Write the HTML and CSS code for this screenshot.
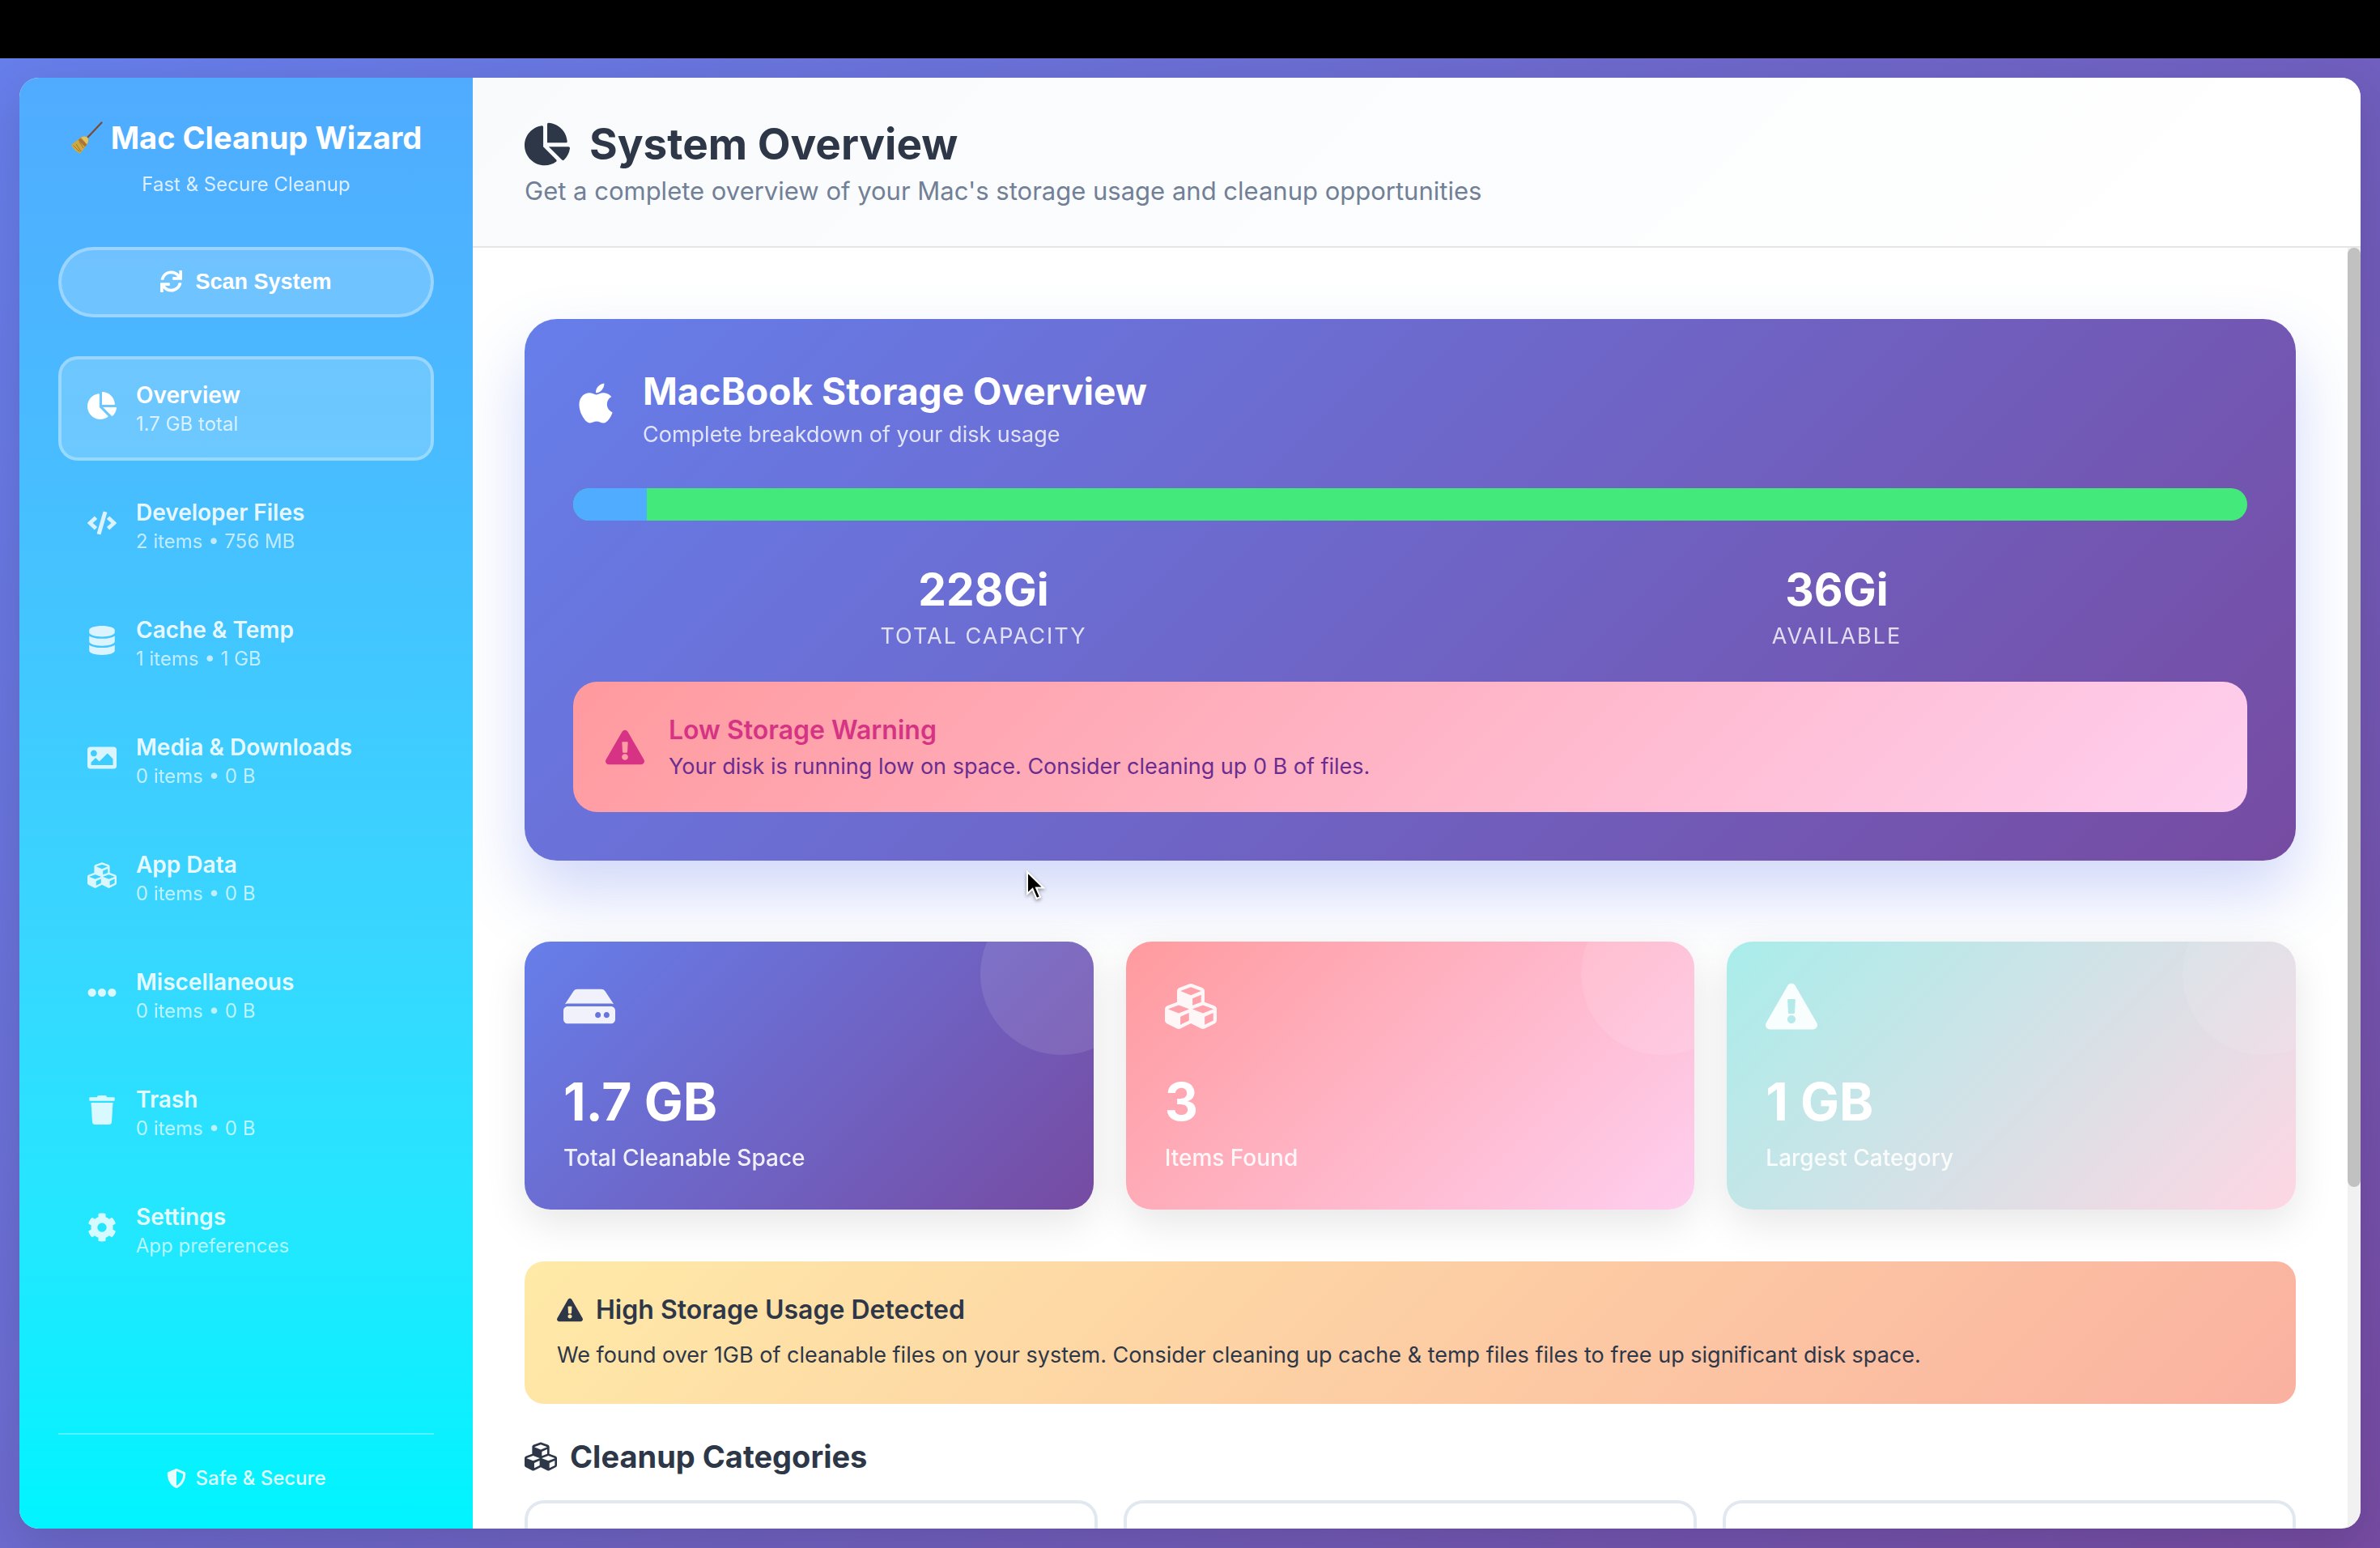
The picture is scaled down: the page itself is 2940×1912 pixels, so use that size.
FILE: index.html
```html
<!DOCTYPE html>
<html lang="en">
<head>
<meta charset="utf-8">
<title>Mac Cleanup Wizard</title>
<link rel="stylesheet" href="styles.css">
</head>
<body>
<svg class="sprite" aria-hidden="true">
  <symbol id="i-pie" viewBox="0 0 544 512"><path d="M527.79 288H290.5l158.03 158.03c6.04 6.04 15.98 6.53 22.19.68 38.7-36.46 65.32-85.61 73.13-140.86 1.34-9.46-6.51-17.85-16.06-17.85zm-15.83-64.8C503.72 103.74 408.26 8.28 288.8.04 279.68-.59 272 7.1 272 16.24V240h223.77c9.14 0 16.82-7.68 16.19-16.8zM224 288V50.71c0-9.55-8.39-17.4-17.84-16.06C86.99 51.49-4.1 155.6.14 280.37 4.5 408.51 114.83 513.59 243.03 511.98c50.4-.63 96.97-16.87 135.26-44.03 7.9-5.6 8.42-17.23 1.57-24.08L224 288z"/></symbol>
  <symbol id="i-code" viewBox="0 0 640 512"><path d="M278.9 511.5l-61-17.7c-6.4-1.8-10-8.5-8.2-14.9L346.2 8.7c1.8-6.4 8.5-10 14.9-8.2l61 17.7c6.4 1.8 10 8.5 8.2 14.9L293.8 503.3c-1.9 6.4-8.5 10.1-14.9 8.2zm-114-112.2l43.5-46.4c4.6-4.9 4.3-12.7-.8-17.2L117 256l90.6-79.7c5.1-4.5 5.5-12.3.8-17.2l-43.5-46.4c-4.5-4.8-12.1-5.1-17-.5L3.8 247.2c-5.1 4.7-5.1 12.8 0 17.5l144.1 135.1c4.9 4.6 12.5 4.4 17-.5zm327.2.6l144.1-135.1c5.1-4.7 5.1-12.8 0-17.5L492.1 112.1c-4.8-4.5-12.4-4.3-17 .5L431.6 159c-4.6 4.9-4.3 12.7.8 17.2L523 256l-90.6 79.7c-5.1 4.5-5.5 12.3-.8 17.2l43.5 46.4c4.5 4.9 12.1 5.1 17 .6z"/></symbol>
  <symbol id="i-database" viewBox="0 0 448 512"><path d="M448 73.143v45.714C448 159.143 347.667 192 224 192S0 159.143 0 118.857V73.143C0 32.857 100.333 0 224 0s224 32.857 224 73.143zM448 176v102.857C448 319.143 347.667 352 224 352S0 319.143 0 278.857V176c48.125 33.143 136.208 48.572 224 48.572S399.874 209.143 448 176zm0 160v102.857C448 479.143 347.667 512 224 512S0 479.143 0 438.857V336c48.125 33.143 136.208 48.572 224 48.572S399.874 369.143 448 336z"/></symbol>
  <symbol id="i-image" viewBox="0 0 512 512"><path d="M464 448H48c-26.51 0-48-21.49-48-48V112c0-26.51 21.49-48 48-48h416c26.51 0 48 21.49 48 48v288c0 26.51-21.49 48-48 48zM112 120c-30.928 0-56 25.072-56 56s25.072 56 56 56 56-25.072 56-56-25.072-56-56-56zM64 384h384V272l-87.515-87.515c-4.686-4.686-12.284-4.686-16.971 0L208 320l-55.515-55.515c-4.686-4.686-12.284-4.686-16.971 0L64 336v48z"/></symbol>
  <symbol id="i-cubes" viewBox="0 0 512 512"><path d="M488.6 250.2L392 214V105.5c0-15-9.3-28.4-23.4-33.7l-100-37.5c-8.1-3.1-17.1-3.1-25.3 0l-100 37.5c-14.1 5.3-23.4 18.7-23.4 33.7V214l-96.6 36.2C9.3 255.5 0 268.9 0 283.9V394c0 13.6 7.7 26.1 19.9 32.2l100 50c10.1 5.1 22.1 5.1 32.2 0l103.9-52 103.9 52c10.1 5.1 22.1 5.1 32.2 0l100-50c12.2-6.1 19.9-18.6 19.9-32.2V283.9c0-15-9.3-28.4-23.4-33.7zM358 214.8l-85 31.9v-68.2l85-37v73.3zM154 104.1l102-38.2 102 38.2v.6l-102 41.4-102-41.4v-.6zm84 291.1l-85 42.5v-79.1l85-38.8v75.4zm0-112l-102 41.4-102-41.4v-.6l102-38.2 102 38.2v.6zm240 112l-85 42.5v-79.1l85-38.8v75.4zm0-112l-102 41.4-102-41.4v-.6l102-38.2 102 38.2v.6z"/></symbol>
  <symbol id="i-dots" viewBox="0 0 512 512"><path d="M328 256c0 39.8-32.2 72-72 72s-72-32.2-72-72 32.2-72 72-72 72 32.2 72 72zm104-72c-39.8 0-72 32.2-72 72s32.2 72 72 72 72-32.2 72-72-32.2-72-72-72zm-352 0c-39.8 0-72 32.2-72 72s32.2 72 72 72 72-32.2 72-72-32.2-72-72-72z"/></symbol>
  <symbol id="i-trash" viewBox="0 0 448 512"><path d="M432 32H312l-9.4-18.7A24 24 0 0 0 281.1 0H166.8a23.72 23.72 0 0 0-21.4 13.3L136 32H16A16 16 0 0 0 0 48v32a16 16 0 0 0 16 16h416a16 16 0 0 0 16-16V48a16 16 0 0 0-16-16zM53.2 467a48 48 0 0 0 47.9 45h245.8a48 48 0 0 0 47.9-45L416 128H32z"/></symbol>
  <symbol id="i-cog" viewBox="0 0 512 512"><path d="M487.4 315.7l-42.6-24.6c4.3-23.2 4.3-47 0-70.2l42.6-24.6c4.9-2.8 7.1-8.6 5.5-14-11.1-35.6-30-67.8-54.7-94.6-3.8-4.1-10-5.1-14.8-2.3L380.8 110c-17.9-15.4-38.5-27.3-60.8-35.1V25.8c0-5.6-3.9-10.5-9.4-11.7-36.7-8.2-74.3-7.8-109.2 0-5.5 1.2-9.4 6.1-9.4 11.7V75c-22.2 7.9-42.8 19.8-60.8 35.1L88.7 85.5c-4.9-2.8-11-1.9-14.8 2.3-24.7 26.7-43.6 58.9-54.7 94.6-1.7 5.4.6 11.2 5.5 14L67.3 221c-4.3 23.2-4.3 47 0 70.2l-42.6 24.6c-4.9 2.8-7.1 8.6-5.5 14 11.1 35.6 30 67.8 54.7 94.6 3.8 4.1 10 5.1 14.8 2.3l42.6-24.6c17.9 15.4 38.5 27.3 60.8 35.1v49.2c0 5.6 3.9 10.5 9.4 11.7 36.7 8.2 74.3 7.8 109.2 0 5.5-1.2 9.4-6.1 9.4-11.7v-49.2c22.2-7.9 42.8-19.8 60.8-35.1l42.6 24.6c4.9 2.8 11 1.9 14.8-2.3 24.7-26.7 43.6-58.9 54.7-94.6 1.5-5.5-.7-11.3-5.6-14.1zM256 336c-44.1 0-80-35.9-80-80s35.9-80 80-80 80 35.9 80 80-35.9 80-80 80z"/></symbol>
  <symbol id="i-sync" viewBox="0 0 512 512"><path d="M440.65 12.57l4 82.77A247.16 247.16 0 0 0 255.83 8C134.73 8 33.91 94.92 12.29 209.82A12 12 0 0 0 24.09 224h49.05a12 12 0 0 0 11.67-9.26 175.91 175.91 0 0 1 317-56.94l-101.46-4.86a12 12 0 0 0-12.57 12v47.41a12 12 0 0 0 12 12H500a12 12 0 0 0 12-12V12a12 12 0 0 0-12-12h-47.37a12 12 0 0 0-11.98 12.57zM255.83 432a175.61 175.61 0 0 1-146-77.8l101.8 4.87a12 12 0 0 0 12.57-12v-47.4a12 12 0 0 0-12-12H12a12 12 0 0 0-12 12V500a12 12 0 0 0 12 12h47.35a12 12 0 0 0 12-12.6l-4.15-82.57A247.17 247.17 0 0 0 255.83 504c121.11 0 221.93-86.92 243.55-201.82a12 12 0 0 0-11.8-14.18h-49.05a12 12 0 0 0-11.67 9.26A175.86 175.86 0 0 1 255.83 432z"/></symbol>
  <symbol id="i-apple" viewBox="0 0 384 512"><path d="M318.7 268.7c-.2-36.7 16.4-64.4 50-84.8-18.8-26.9-47.2-41.7-84.7-44.6-35.5-2.8-74.3 20.7-88.5 20.7-15 0-49.4-19.7-76.4-19.7C63.3 141.2 4 184.8 4 273.5q0 39.3 14.4 81.2c12.8 36.7 59 126.7 107.2 125.2 25.2-.6 43-17.9 75.8-17.9 31.8 0 48.3 17.9 76.4 17.9 48.6-.7 90.4-82.5 102.6-119.3-65.2-30.7-61.7-90-61.7-91.9zm-56.6-164.2c27.3-32.4 24.8-61.9 24-72.5-24.1 1.4-52 16.4-67.9 34.9-17.5 19.8-27.8 44.3-25.6 71.9 26.1 2 49.9-11.4 69.5-34.3z"/></symbol>
  <symbol id="i-warn" viewBox="0 0 576 512"><path d="M569.517 440.013C587.975 472.007 564.806 512 527.94 512H48.054c-36.937 0-59.999-40.055-41.577-71.987L246.423 23.985c18.467-32.009 64.72-31.951 83.154 0l239.94 416.028zM288 354c-25.405 0-46 20.595-46 46s20.595 46 46 46 46-20.595 46-46-20.595-46-46-46zm-43.673-165.346l7.418 136c.347 6.364 5.609 11.346 11.982 11.346h48.546c6.373 0 11.635-4.982 11.982-11.346l7.418-136c.375-6.874-5.098-12.654-11.982-12.654h-63.383c-6.884 0-12.356 5.78-11.981 12.654z"/></symbol>
  <symbol id="i-hdd" viewBox="0 0 576 512"><path d="M576 304v96c0 26.51-21.49 48-48 48H48c-26.51 0-48-21.49-48-48v-96c0-26.51 21.49-48 48-48h480c26.51 0 48 21.49 48 48zm-48-80a79.557 79.557 0 0 1 30.777 6.165L462.25 85.374A48.003 48.003 0 0 0 422.311 64H153.689a48 48 0 0 0-39.938 21.374L17.223 230.165A79.557 79.557 0 0 1 48 224h480zm-48 96c-17.673 0-32 14.327-32 32s14.327 32 32 32 32-14.327 32-32-14.327-32-32-32zm-96 0c-17.673 0-32 14.327-32 32s14.327 32 32 32 32-14.327 32-32-14.327-32-32-32z"/></symbol>
  <symbol id="i-shield" viewBox="0 0 512 512"><path d="M466.5 83.7l-192-80a48.15 48.15 0 0 0-36.9 0l-192 80C27.7 91.1 16 108.6 16 128c0 198.5 114.5 335.7 221.5 380.3 11.8 4.9 25.1 4.9 36.9 0C360.1 472.6 496 349.3 496 128c0-19.4-11.7-36.9-29.5-44.3zM256.1 446.3l-.1-381 175.9 73.3c-3.3 151.4-82.1 261.1-175.8 307.7z"/></symbol>
</svg>

<div class="window">
  <aside class="sidebar">
    <header class="brand">
      <h1 class="brand-title">
        <svg class="broom" viewBox="0 0 40 40" aria-hidden="true">
          <path d="M38.500 1.500L20 21" stroke="#7a4a33" stroke-width="2.200" stroke-linecap="round"/>
          <path d="M13 19.500c3-2 7-1.500 8.500 1s.5 7-2 9.500L12 39.500C8 38 3 34 1 29z" fill="#cfa83f"/>
          <path d="M7 28l6 9M11 25l5 8M3.500 29.500l8 8" stroke="#a07a2a" stroke-width="1"/>
          <path d="M9.500 23l3-2.500 8 8-2.500 3z" fill="#a9743a"/>
          <path d="M13.500 20c3-2 7-1.500 8 .8s.4 5-1.200 7.200z" fill="#e2c463"/>
        </svg>
        <span>Mac Cleanup Wizard</span>
      </h1>
      <p class="brand-sub">Fast &amp; Secure Cleanup</p>
    </header>

    <button class="scan" type="button"><svg class="icon"><use href="#i-sync"/></svg>Scan System</button>

    <nav class="nav">
      <a class="nav-item active" href="#overview"><svg class="icon"><use href="#i-pie"/></svg><span class="nav-text"><span class="nav-name">Overview</span><span class="nav-meta">1.7 GB total</span></span></a>
      <a class="nav-item" href="#developer"><svg class="icon"><use href="#i-code"/></svg><span class="nav-text"><span class="nav-name">Developer Files</span><span class="nav-meta">2 items • 756 MB</span></span></a>
      <a class="nav-item" href="#cache"><svg class="icon"><use href="#i-database"/></svg><span class="nav-text"><span class="nav-name">Cache &amp; Temp</span><span class="nav-meta">1 items • 1 GB</span></span></a>
      <a class="nav-item" href="#media"><svg class="icon"><use href="#i-image"/></svg><span class="nav-text"><span class="nav-name">Media &amp; Downloads</span><span class="nav-meta">0 items • 0 B</span></span></a>
      <a class="nav-item" href="#apps"><svg class="icon"><use href="#i-cubes"/></svg><span class="nav-text"><span class="nav-name">App Data</span><span class="nav-meta">0 items • 0 B</span></span></a>
      <a class="nav-item" href="#misc"><svg class="icon"><use href="#i-dots"/></svg><span class="nav-text"><span class="nav-name">Miscellaneous</span><span class="nav-meta">0 items • 0 B</span></span></a>
      <a class="nav-item" href="#trash"><svg class="icon"><use href="#i-trash"/></svg><span class="nav-text"><span class="nav-name">Trash</span><span class="nav-meta">0 items • 0 B</span></span></a>
      <a class="nav-item" href="#settings"><svg class="icon"><use href="#i-cog"/></svg><span class="nav-text"><span class="nav-name">Settings</span><span class="nav-meta">App preferences</span></span></a>
    </nav>

    <footer class="safe"><svg class="icon"><use href="#i-shield"/></svg>Safe &amp; Secure</footer>
  </aside>

  <main class="main">
    <header class="page-head">
      <h2 class="page-title"><svg class="icon"><use href="#i-pie"/></svg>System Overview</h2>
      <p class="page-sub">Get a complete overview of your Mac's storage usage and cleanup opportunities</p>
    </header>

    <div class="scroller">
      <div class="content">
        <section class="storage">
          <div class="storage-head">
            <svg class="icon"><use href="#i-apple"/></svg>
            <div>
              <h3 class="storage-title">MacBook Storage Overview</h3>
              <p class="storage-sub">Complete breakdown of your disk usage</p>
            </div>
          </div>
          <div class="bar"><div class="bar-used" style="width: 4.4%"></div></div>
          <dl class="figures">
            <div class="figure"><dd>228Gi</dd><dt>Total capacity</dt></div>
            <div class="figure"><dd>36Gi</dd><dt>Available</dt></div>
          </dl>
          <div class="low" role="alert">
            <svg class="icon"><use href="#i-warn"/></svg>
            <div>
              <h4 class="low-title">Low Storage Warning</h4>
              <p class="low-text">Your disk is running low on space. Consider cleaning up 0 B of files.</p>
            </div>
          </div>
        </section>

        <section class="stats">
          <article class="stat stat-space"><svg class="icon"><use href="#i-hdd"/></svg><strong>1.7 GB</strong><span>Total Cleanable Space</span></article>
          <article class="stat stat-items"><svg class="icon"><use href="#i-cubes"/></svg><strong>3</strong><span>Items Found</span></article>
          <article class="stat stat-largest"><svg class="icon"><use href="#i-warn"/></svg><strong>1 GB</strong><span>Largest Category</span></article>
        </section>

        <section class="notice">
          <h3 class="notice-title"><svg class="icon"><use href="#i-warn"/></svg>High Storage Usage Detected</h3>
          <p class="notice-text">We found over 1GB of cleanable files on your system. Consider cleaning up cache &amp; temp files files to free up significant disk space.</p>
        </section>

        <h3 class="section-title"><svg class="icon"><use href="#i-cubes"/></svg>Cleanup Categories</h3>
        <section class="categories">
          <div class="category"></div>
          <div class="category"></div>
          <div class="category"></div>
        </section>
      </div>
      <div class="track"><div class="thumb"></div></div>
    </div>
  </main>
</div>

<svg class="pointer" viewBox="0 0 24 38" aria-hidden="true"><path d="M2 2v27l6.500-6 5 12 4.500-2-5-11.500h9z" fill="#000" stroke="#fff" stroke-width="2"/></svg>
</body>
</html>
```

FILE: styles.css
```css
* { box-sizing: border-box; margin: 0; padding: 0; }

html { height: 100%; background: #000; }

body {
  height: 100%;
  border-top: 72px solid #000;
  padding: 24px;
  font-family: "Inter", "Liberation Sans", sans-serif;
  font-size: 28px;
  color: #2d3748;
  background: linear-gradient(135deg, #667eea 0%, #764ba2 100%) padding-box;
  overflow: hidden;
}

.sprite { display: none; }
.icon { display: block; flex: none; width: 1em; height: 1em; fill: currentColor; }

.window {
  display: flex;
  height: 100%;
  border-radius: 24px;
  overflow: hidden;
  background: #fff;
  box-shadow: 0 20px 60px rgba(0, 0, 0, 0.12);
}

/* Sidebar */
.sidebar {
  display: flex;
  flex-direction: column;
  flex: none;
  width: 560px;
  padding: 48px 48px 46px;
  color: #fff;
  background: linear-gradient(180deg, #50abff 0%, #48bcff 26%, #38d6ff 59%, #24e6ff 78%, #00f4ff 100%);
}

.brand { text-align: center; margin-bottom: 60px; }
.brand-title {
  display: flex;
  justify-content: center;
  align-items: center;
  gap: 10px;
  font-size: 38px;
  line-height: 52px;
  font-weight: 700;
}
.broom { width: 40px; height: 40px; fill: none; }
.brand-sub { margin-top: 14px; font-size: 24px; line-height: 35px; opacity: 0.8; }

.scan {
  display: flex;
  justify-content: center;
  align-items: center;
  gap: 16px;
  flex: none;
  height: 87px;
  padding-bottom: 2px;
  border: 4px solid rgba(255, 255, 255, 0.3);
  border-radius: 50px;
  background: rgba(255, 255, 255, 0.2);
  font: 700 27px/32px "Liberation Sans", sans-serif;
  color: #fff;
}
.scan .icon { width: 27px; height: 27px; }

.nav { display: flex; flex-direction: column; gap: 16px; margin-top: 48px; }
.nav-item {
  display: flex;
  align-items: center;
  gap: 24px;
  height: 129px;
  padding: 0 32px;
  border: 4px solid transparent;
  border-radius: 24px;
  color: rgba(255, 255, 255, 0.9);
  text-decoration: none;
}
.nav-item .icon { width: 36px; height: 36px; margin-bottom: 8px; opacity: 0.9; }
.nav-item.active {
  color: #fff;
  background: rgba(255, 255, 255, 0.2);
  border-color: rgba(255, 255, 255, 0.3);
}
.nav-item.active .icon { opacity: 1; }
.nav-text { display: flex; flex-direction: column; }
.nav-name { font-size: 28px; line-height: 38px; font-weight: 600; }
.nav-meta { font-size: 24px; line-height: 34px; opacity: 0.75; }

.safe {
  display: flex;
  justify-content: center;
  align-items: center;
  gap: 12px;
  margin-top: auto;
  padding-top: 38px;
  border-top: 2px solid rgba(255, 255, 255, 0.3);
  font-size: 24px;
  line-height: 32px;
  font-weight: 500;
  color: rgba(255, 255, 255, 0.9);
}

/* Main column */
.main { display: flex; flex-direction: column; flex: 1; min-width: 0; }

.page-head {
  flex: none;
  padding: 48px 64px;
  background: linear-gradient(135deg, #f8fafc 0%, #fff 100%);
  border-bottom: 2px solid #e5e5e5;
}
.page-title {
  display: flex;
  align-items: center;
  gap: 24px;
  font-size: 53px;
  line-height: 68px;
  font-weight: 700;
}
.page-sub { font-size: 31px; line-height: 40px; margin-top: 4px; color: #718096; }

.scroller { display: flex; flex: 1; min-height: 0; overflow: hidden; }
.content { flex: 1; min-width: 0; padding: 88px 64px 0; }
.track { flex: none; width: 16px; background: #f1f1f1; }
.thumb { height: 73.3%; border-radius: 8px; background: #c1c1c1; }

.content { margin-right: -16px; padding-right: 80px; }
.track { position: relative; }

.storage {
  padding: 60px;
  border-radius: 40px;
  color: #fff;
  background: linear-gradient(135deg, #667eea 0%, #764ba2 100%);
  box-shadow: 0 40px 80px rgba(102, 126, 234, 0.3);
}
.storage-head { display: flex; align-items: flex-start; gap: 30px; margin-bottom: 48px; }
.storage-head .icon { width: 56px; height: 56px; margin-top: 16px; }
.storage-title { font-size: 46px; line-height: 58px; font-weight: 700; }
.storage-sub { margin-top: 7px; font-size: 27px; line-height: 36px; opacity: 0.8; }

.bar { height: 40px; border-radius: 20px; overflow: hidden; background: #43e97b; }
.bar-used { height: 100%; background: #4facfe; }

.figures { display: grid; grid-template-columns: 1fr 1fr; gap: 40px; margin: 50px 0 38px; }
.figure { text-align: center; }
.figure dd { font-size: 55px; line-height: 70px; font-weight: 700; }
.figure dt {
  margin-top: 5px;
  font-size: 27px;
  line-height: 36px;
  letter-spacing: 2px;
  text-transform: uppercase;
  opacity: 0.8;
}

.low {
  display: flex;
  align-items: center;
  gap: 30px;
  padding: 40px;
  border-radius: 30px;
  background: linear-gradient(135deg, #ff9a9e 0%, #fecfef 100%);
}
.low .icon { width: 48px; height: 48px; color: #d63384; }
.low-title { font-size: 32px; line-height: 40px; font-weight: 600; color: #d63384; }
.low-text { margin-top: 9px; font-size: 27px; line-height: 32px; color: #6b2c91; }

.stats { display: grid; grid-template-columns: repeat(3, 1fr); gap: 40px; margin-top: 100px; }
.stat {
  position: relative;
  display: flex;
  flex-direction: column;
  padding: 48px;
  border-radius: 32px;
  overflow: hidden;
  color: #fff;
  box-shadow: 0 16px 50px rgba(0, 0, 0, 0.1);
}
.stat::before {
  content: "";
  position: absolute;
  top: -60px;
  right: -60px;
  width: 200px;
  height: 200px;
  border-radius: 50%;
  background: rgba(255, 255, 255, 0.1);
}
.stat-space { background: linear-gradient(135deg, #667eea 0%, #764ba2 100%); }
.stat-items { background: linear-gradient(135deg, #ff9a9e 0%, #fecfef 100%); }
.stat-largest { background: linear-gradient(135deg, #a8edea 0%, #fed6e3 100%); }
.stat .icon { width: 64px; height: 64px; opacity: 0.9; }
.stat strong { margin-top: 46px; font-size: 64px; line-height: 80px; font-weight: 700; }
.stat span { margin-top: 13px; font-size: 28px; line-height: 32px; font-weight: 500; opacity: 0.9; }

.notice {
  margin-top: 64px;
  padding: 40px;
  border-radius: 24px;
  background: linear-gradient(135deg, #ffeaa7 0%, #fab1a0 100%);
}
.notice-title {
  display: flex;
  align-items: center;
  gap: 16px;
  font-size: 32px;
  line-height: 40px;
  font-weight: 600;
}
.notice-text { margin-top: 16px; font-size: 27px; line-height: 40px; }

.section-title {
  display: flex;
  align-items: center;
  gap: 16px;
  margin-top: 40px;
  font-size: 38px;
  line-height: 50px;
  font-weight: 700;
}
.page-title .icon { width: 56px; height: 56px; }
.section-title .icon { width: 40px; height: 40px; }
.categories { display: grid; grid-template-columns: repeat(3, 1fr); gap: 32px; margin-top: 29px; }
.category { height: 300px; border: 4px solid #e2e8f0; border-radius: 24px; background: #fff; }

.pointer {
  position: absolute;
  left: 1267px;
  top: 1075px;
  width: 24px;
  height: 38px;
  filter: drop-shadow(0 2px 2px rgba(0, 0, 0, 0.4));
}
```
